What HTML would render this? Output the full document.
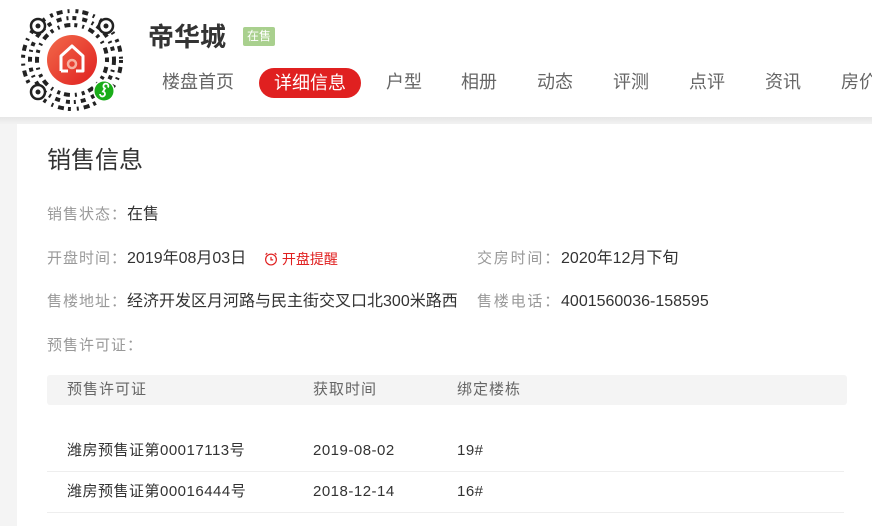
<!DOCTYPE html>
<html><head><meta charset="utf-8"><style>
*{margin:0;padding:0;box-sizing:border-box}
body{width:872px;height:526px;overflow:hidden;background:#f4f4f4;font-family:"Liberation Sans","Noto Sans CJK SC",sans-serif;position:relative}
.hd{position:absolute;left:0;top:0;width:872px;height:117px;background:#fff}
.shadow{position:absolute;left:0;top:117px;width:872px;height:7px;background:linear-gradient(#e6e6e6,#f2f2f2)}
.card{position:absolute;left:17px;top:124px;width:855px;height:402px;background:#fff}
.a{position:absolute;white-space:nowrap}
.nav{font-size:18px;color:#666;top:70px;line-height:24px}
.lab{font-size:15px;color:#999;letter-spacing:1px;line-height:20px}
.val{font-size:16px;color:#333;letter-spacing:0}
.td{font-size:15px;color:#333;letter-spacing:0.5px;line-height:18px}
.th{font-size:15px;color:#666;letter-spacing:1px;line-height:20px}
</style></head><body>
<div class="hd">
<svg class="a" style="left:10px;top:0" width="125" height="118" viewBox="0 0 125 118">
<g fill="none" stroke="#222" stroke-linecap="butt">
<circle cx="62" cy="60" r="49" stroke-width="4" stroke-dasharray="3 4 6 5 2 6"/>
<circle cx="62" cy="60" r="42" stroke-width="4" stroke-dasharray="5 5 2 4 4 6"/>
<circle cx="62" cy="60" r="35" stroke-width="4" stroke-dasharray="2 5 6 4 3 5"/>
</g>
<g fill="#fff" stroke="#222" stroke-width="2.5">
<circle cx="28" cy="26" r="7"/><circle cx="96" cy="26" r="7"/><circle cx="28" cy="92" r="7"/>
</g>
<g fill="#222"><circle cx="28" cy="26" r="2.5"/><circle cx="96" cy="26" r="2.5"/><circle cx="28" cy="92" r="2.5"/></g>
<defs><linearGradient id="g" x1="0" y1="0" x2="1" y2="1"><stop offset="0" stop-color="#f26a4a"/><stop offset="1" stop-color="#e02020"/></linearGradient></defs>
<circle cx="62" cy="60" r="27" fill="#fff"/>
<circle cx="62" cy="60" r="25" fill="url(#g)"/>
<path d="M51 71V56L62 46L73 56V71H66M58 71H51" fill="none" stroke="#fff" stroke-width="3" stroke-linejoin="round"/>
<circle cx="62" cy="64" r="4" fill="none" stroke="#f6b0a0" stroke-width="2.5"/>
<circle cx="94" cy="91" r="11" fill="#fff"/>
<circle cx="94" cy="91" r="9.5" fill="#1aad19"/>
<path d="M90 94a2.5 2.5 0 1 0 3-2.5l2-3a2.5 2.5 0 1 1 3 -1" fill="none" stroke="#fff" stroke-width="1.8"/>
</svg>
<div class="a" style="left:148px;top:20px;font-size:26px;font-weight:bold;color:#333;line-height:34px">帝华城</div>
<div class="a" style="left:243px;top:27px;width:32px;height:19px;background:#a9d08e;color:#fff;font-size:12px;line-height:19px;text-align:center;border-radius:2px">在售</div>
<div class="a nav" style="left:162px">楼盘首页</div>
<div class="a" style="left:259px;top:68px;width:102px;height:30px;background:#e02020;border-radius:15px;color:#fff;font-size:18px;line-height:30px;text-align:center">详细信息</div>
<div class="a nav" style="left:386px">户型</div>
<div class="a nav" style="left:461px">相册</div>
<div class="a nav" style="left:537px">动态</div>
<div class="a nav" style="left:613px">评测</div>
<div class="a nav" style="left:689px">点评</div>
<div class="a nav" style="left:765px">资讯</div>
<div class="a nav" style="left:841px">房价</div>
</div>
<div class="shadow"></div>
<div class="card"></div>
<div class="a" style="left:47px;top:145px;font-size:24px;color:#333;line-height:32px">销售信息</div>
<div class="a lab" style="left:47px;top:205px">销售状态：<span class="val">在售</span></div>
<div class="a lab" style="left:47px;top:249px">开盘时间：<span class="val">2019年08月03日</span></div>
<div class="a" style="left:264px;top:250px;font-size:14px;color:#e02020;line-height:18px"><svg width="14" height="14" viewBox="0 0 13 13" style="vertical-align:-2px"><circle cx="6.5" cy="7" r="5" fill="none" stroke="#e02020" stroke-width="1.1"/><path d="M6.5 4.5V7.3H8.5M1.5 2.5L3 1M11.5 2.5L10 1" fill="none" stroke="#e02020" stroke-width="1.1"/></svg> 开盘提醒</div>
<div class="a lab" style="left:477px;top:249px;letter-spacing:1.8px">交房时间：<span class="val">2020年12月下旬</span></div>
<div class="a lab" style="left:47px;top:292px">售楼地址：<span class="val">经济开发区月河路与民主街交叉口北300米路西</span></div>
<div class="a lab" style="left:477px;top:292px;letter-spacing:1.8px">售楼电话：<span class="val">4001560036-158595</span></div>
<div class="a lab" style="left:47px;top:336px">预售许可证：</div>
<div class="a" style="left:47px;top:375px;width:800px;height:30px;background:#f4f4f4;border-radius:3px"></div>
<div class="a th" style="left:67px;top:380px">预售许可证</div>
<div class="a th" style="left:313px;top:380px">获取时间</div>
<div class="a th" style="left:457px;top:380px">绑定楼栋</div>
<div class="a td" style="left:67px;top:442px">潍房预售证第00017113号</div>
<div class="a td" style="left:313px;top:442px">2019-08-02</div>
<div class="a td" style="left:457px;top:442px">19#</div>
<div class="a" style="left:47px;top:471px;width:797px;height:1px;background:#eee"></div>
<div class="a td" style="left:67px;top:483px">潍房预售证第00016444号</div>
<div class="a td" style="left:313px;top:483px">2018-12-14</div>
<div class="a td" style="left:457px;top:483px">16#</div>
<div class="a" style="left:47px;top:512px;width:797px;height:1px;background:#eee"></div>
</body></html>
